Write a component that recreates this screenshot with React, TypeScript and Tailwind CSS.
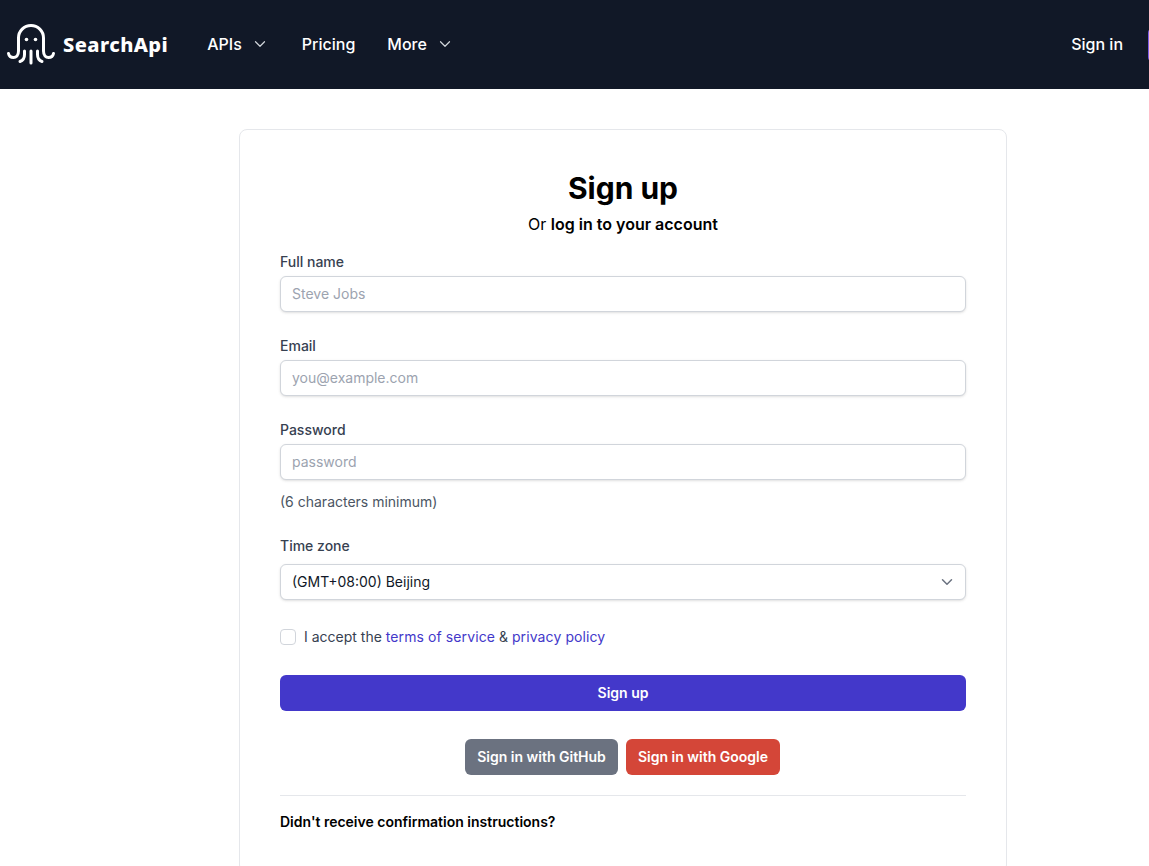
import { ChevronDown } from "lucide-react";

const inter = { fontFamily: "Inter, sans-serif" };

function Logo() {
  return (
    <div className="flex items-center">
      <svg viewBox="6 22 50 44" fill="none" stroke="#fff" strokeWidth="3" strokeLinecap="round" strokeLinejoin="round" className="ml-[6px] h-[44px] w-[50px] shrink-0">
        <path d="M18.500 37a12.500 12.500 0 0 1 25 0v13c0 4.500 2.500 6.500 5 6.500s4.500-1.500 5-4" />
        <path d="M18.500 37v13c0 4.500-2.500 6.500-5 6.500s-4.500-1.500-5-4" />
        <path d="M24.500 50v3.500c0 3.500-1.500 6-4.500 7M37.500 50v3.500c0 3.500 1.500 6 4.500 7M31 50v12" />
        <circle cx="26.500" cy="38.500" r="1.800" fill="#fff" stroke="none" />
        <circle cx="35.500" cy="38.500" r="1.800" fill="#fff" stroke="none" />
      </svg>
      <span className="ml-[7px] text-[20px] font-extrabold tracking-[0.45px] text-white" style={{ fontFamily: '"Noto Sans", sans-serif' }}>SearchApi</span>
    </div>
  );
}

function Field({ label, placeholder }: { label: string; placeholder: string }) {
  return (
    <div>
      <label className="block text-sm leading-5 font-medium text-[#374151]">{label}</label>
      <input
        placeholder={placeholder}
        className="mt-1 block h-9 w-full rounded-md border border-[#d1d5db] bg-white px-[11px] pb-[2px] text-sm text-[#111827] shadow-sm outline-none placeholder:text-[#9ca3af]"
      />
    </div>
  );
}

export default function App() {
  return (
    <div className="h-screen overflow-hidden bg-white" style={inter}>
      <div className="w-[1246px]">
        <header className="flex h-[89px] items-center bg-[#111827]">
          <Logo />
          <nav className="ml-[39px] flex items-center pb-[2px] text-base font-medium text-white">
            <a className="flex items-center">APIs<ChevronDown className="ml-[9px] h-[18px] w-[18px] text-[#d1d5db]" strokeWidth={1.6} /></a>
            <a className="ml-[33px]">Pricing</a>
            <a className="ml-[32px] flex items-center">More<ChevronDown className="ml-[9px] h-[18px] w-[18px] text-[#d1d5db]" strokeWidth={1.6} /></a>
          </nav>
          <div className="ml-auto flex items-center">
            <a className="pb-[2px] text-base font-medium text-white">Sign in</a>
            <div className="mr-[16px] ml-[25px] h-9 w-[82px] rounded-md bg-[#7c5ce6]" />
          </div>
        </header>

        <main className="mx-auto mt-10 w-[768px] rounded-lg border border-[#e5e7eb] px-10 py-10">
          <h1 className="text-center text-3xl font-bold text-black">Sign up</h1>
          <p className="mt-1.5 text-center text-base text-black">
            Or <a className="font-semibold">log in to your account</a>
          </p>

          <div className="mt-4 flex flex-col gap-6">
            <Field label="Full name" placeholder="Steve Jobs" />
            <Field label="Email" placeholder="you@example.com" />
            <div>
              <Field label="Password" placeholder="password" />
              <p className="mt-3 text-sm leading-5 text-[#4b5563]">(6 characters minimum)</p>
            </div>
            <div>
              <label className="block text-sm leading-5 font-medium text-[#374151]">Time zone</label>
              <div className="mt-2 flex h-9 w-full items-center justify-between rounded-md border border-[#d1d5db] bg-white pr-[9px] pl-[11px] text-sm text-[#111827] shadow-sm">
                <span>(GMT+08:00) Beijing</span>
                <ChevronDown className="h-[18px] w-[18px] text-[#6b7280]" strokeWidth={2} />
              </div>
            </div>
          </div>

          <div className="mt-[27px] flex h-5 items-center text-sm text-[#374151]">
            <span className="h-4 w-4 rounded border border-[#d1d5db] bg-white" />
            <span className="ml-2">
              I accept the <a className="tracking-[0.1px] text-[#4338ca]">terms of service</a> &amp; <a className="tracking-[0.1px] text-[#4338ca]">privacy policy</a>
            </span>
          </div>

          <button className="mt-7 flex h-9 w-full items-center justify-center rounded-md bg-[#4338ca] text-sm font-semibold text-white">
            Sign up
          </button>

          <div className="mt-7 flex justify-center gap-2 pr-[1px]">
            <button className="h-9 w-[153px] rounded-md bg-[#6b7280] text-sm font-semibold text-white">Sign in with GitHub</button>
            <button className="h-9 w-[154px] rounded-md bg-[#d44638] text-sm font-semibold text-white">Sign in with Google</button>
          </div>

          <div className="mt-5 border-t border-[#e5e7eb] pt-4">
            <a className="block text-sm leading-5 font-semibold text-black">Didn't receive confirmation instructions?</a>
          </div>
        </main>
      </div>
    </div>
  );
}
